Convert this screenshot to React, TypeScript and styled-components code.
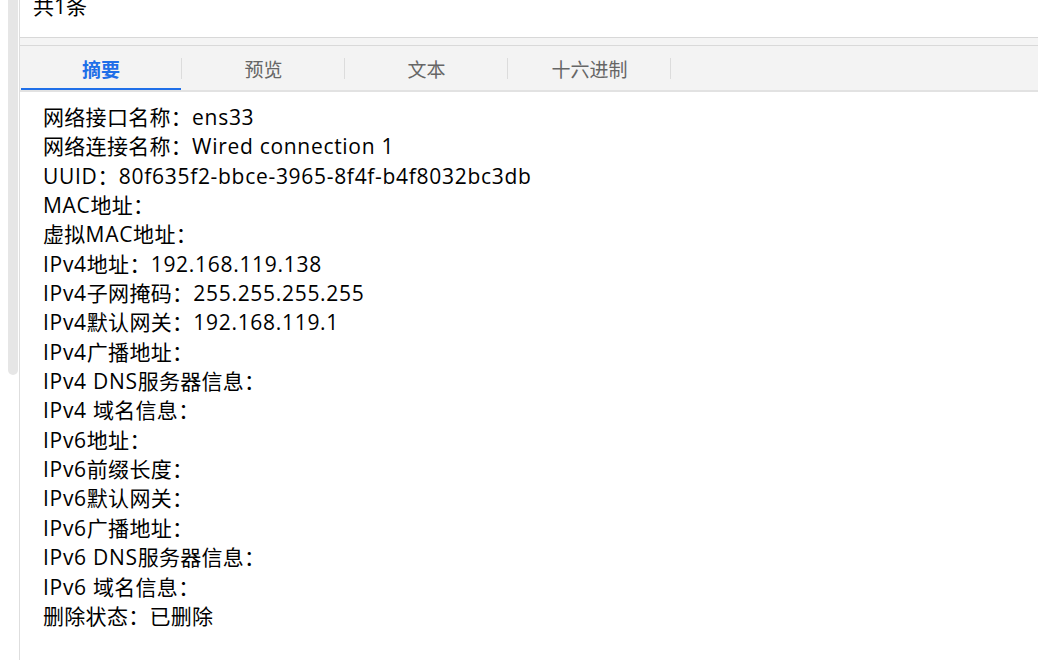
import React from "react";
import styled, { createGlobalStyle } from "styled-components";

const Global = createGlobalStyle`
  html, body { margin: 0; padding: 0; background: #ffffff; }
  body { overflow: hidden; font-family: "Open Sans", "Noto Sans CJK SC", sans-serif; }
`;

const Page = styled.div`
  display: flex;
  width: 1038px;
  height: 660px;
  background: #ffffff;
  overflow: hidden;
`;

const Gutter = styled.div`
  flex: 0 0 19px;
  padding-left: 8px;
  box-sizing: border-box;
`;

const Thumb = styled.div`
  width: 10px;
  height: 375px;
  background: #e6e6e6;
  border-radius: 0 0 5px 5px;
`;

const Panel = styled.div`
  flex: 1;
  display: flex;
  flex-direction: column;
  border-left: 1px solid #dedede;
  min-width: 0;
`;

const CountBar = styled.div`
  height: 38px;
  box-sizing: border-box;
  border-bottom: 1px solid #d8d8d8;
  padding-left: 13px;
  display: flex;
  align-items: flex-start;
  font-size: 21px;
  color: #000;
`;

const CountText = styled.span`
  line-height: 21px;
  margin-top: -4px;
`;

const Gap = styled.div`
  height: 7px;
  background: #f4f4f4;
`;

const TabBar = styled.div`
  display: flex;
  height: 47px;
  box-sizing: border-box;
  background: #f3f3f3;
  border-top: 1px solid #d9d9d9;
  border-bottom: 2px solid #e2e2e2;
`;

const Tab = styled.div<{ $active?: boolean }>`
  position: relative;
  flex: 0 0 163px;
  display: flex;
  align-items: center;
  justify-content: center;
  box-sizing: border-box;
  padding-top: 0;
  font-family: "Noto Sans CJK SC", sans-serif;
  font-size: 19px;
  font-weight: ${(p) => (p.$active ? 700 : 400)};
  color: ${(p) => (p.$active ? "#1f6fe8" : "#666666")};
  &:first-child { flex-basis: 162px; }
  &::before {
    content: "";
    position: absolute;
    left: 1px;
    right: 1px;
    bottom: 0;
    height: 2px;
    background: ${(p) => (p.$active ? "#1f6fe8" : "transparent")};
  }
  &::after {
    content: "";
    position: absolute;
    right: 0;
    top: 12px;
    width: 1px;
    height: 21px;
    background: #dcdcdc;
  }
`;

const Content = styled.div`
  padding: 11px 23px;
  font-size: 21px;
  line-height: 29.35px;
  color: #000;
`;

const Line = styled.div`
  white-space: nowrap;
`;

const Run = styled.span<{ $latin?: boolean }>`
  letter-spacing: ${(p) => (p.$latin ? "0.7px" : "0.3px")};
`;

const lines = [
  "网络接口名称：ens33",
  "网络连接名称：Wired connection 1",
  "UUID：80f635f2-bbce-3965-8f4f-b4f8032bc3db",
  "MAC地址：",
  "虚拟MAC地址：",
  "IPv4地址：192.168.119.138",
  "IPv4子网掩码：255.255.255.255",
  "IPv4默认网关：192.168.119.1",
  "IPv4广播地址：",
  "IPv4 DNS服务器信息：",
  "IPv4 域名信息：",
  "IPv6地址：",
  "IPv6前缀长度：",
  "IPv6默认网关：",
  "IPv6广播地址：",
  "IPv6 DNS服务器信息：",
  "IPv6 域名信息：",
  "删除状态：已删除",
];

const tabs = ["摘要", "预览", "文本", "十六进制"];

function splitRuns(text: string) {
  return text
    .split(/([\u3000-\u9fff\uff00-\uffef]+)/)
    .filter((s) => s.length > 0)
    .map((s) => ({ text: s, latin: !/[\u3000-\u9fff\uff00-\uffef]/.test(s) }));
}

export default function App() {
  return (
    <Page>
      <Global />
      <Gutter>
        <Thumb />
      </Gutter>
      <Panel>
        <CountBar>
          <CountText>共1条</CountText>
        </CountBar>
        <Gap />
        <TabBar>
          {tabs.map((t, i) => (
            <Tab key={t} $active={i === 0}>
              {t}
            </Tab>
          ))}
        </TabBar>
        <Content>
          {lines.map((l) => (
            <Line key={l}>
              {splitRuns(l).map((r, i) => (
                <Run key={i} $latin={r.latin}>
                  {r.text}
                </Run>
              ))}
            </Line>
          ))}
        </Content>
      </Panel>
    </Page>
  );
}
